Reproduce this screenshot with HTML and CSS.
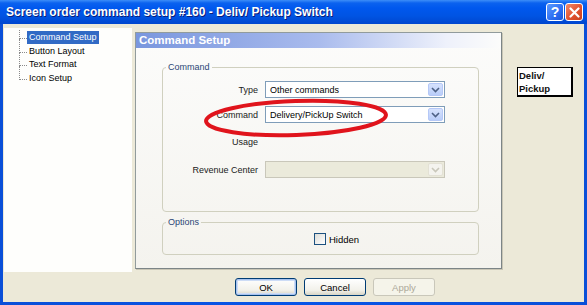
FILE: index.html
```html
<!DOCTYPE html>
<html lang="en">
<head>
    <meta charset="UTF-8">
    <title>Screen order command setup</title>
    <link rel="stylesheet" href="styles.css">
</head>
<body>
    <div class="window">
        <div class="titlebar">
            <span class="title">Screen order command setup #160 - Deliv/ Pickup Switch</span>
            <span class="tbtn help">?</span>
            <span class="tbtn close">
                <svg width="11" height="11" viewBox="0 0 11 11"><path d="M1.5 1.5 L9.5 9.5 M9.5 1.5 L1.5 9.5" stroke="#fff" stroke-width="2.2" stroke-linecap="round"/></svg>
            </span>
        </div>
        <div class="client">
            <div class="top">
                <ul class="tree">
                    <li><span class="sel">Command Setup</span></li>
                    <li><span>Button Layout</span></li>
                    <li><span>Text Format</span></li>
                    <li><span>Icon Setup</span></li>
                </ul>
                <div class="page">
                    <div class="page-head">Command Setup</div>
                    <fieldset class="group cmd">
                        <legend>Command</legend>
                        <div class="form">
                            <label>Type</label>
                            <div class="combo"><span class="val">Other commands</span><span class="drop"><svg width="9" height="6" viewBox="0 0 9 6"><path d="M1 1 L4.5 4.5 L8 1" fill="none" stroke="#4d6185" stroke-width="1.6"/></svg></span></div>
                            <label>Command</label>
                            <div class="combo"><span class="val">Delivery/PickUp Switch</span><span class="drop"><svg width="9" height="6" viewBox="0 0 9 6"><path d="M1 1 L4.5 4.5 L8 1" fill="none" stroke="#4d6185" stroke-width="1.6"/></svg></span></div>
                            <label>Usage</label>
                            <div></div>
                            <label>Revenue Center</label>
                            <div class="combo off"><span class="val"></span><span class="drop"><svg width="9" height="6" viewBox="0 0 9 6"><path d="M1 1 L4.5 4.5 L8 1" fill="none" stroke="#c9c7ba" stroke-width="1.6"/></svg></span></div>
                        </div>
                    </fieldset>
                    <fieldset class="group opts">
                        <legend>Options</legend>
                        <div class="check"><span class="box"></span>Hidden</div>
                    </fieldset>
                </div>
                <div class="preview">Deliv/<br>Pickup</div>
            </div>
            <div class="buttons">
                <span class="btn def">OK</span>
                <span class="btn">Cancel</span>
                <span class="btn dis">Apply</span>
            </div>
        </div>
        <svg class="mark" width="200" height="50" viewBox="0 0 200 50">
            <ellipse cx="100" cy="25" rx="90" ry="17" fill="none" stroke="#e0141c" stroke-width="4" transform="rotate(-2 100 25)"/>
        </svg>
    </div>
</body>
</html>
```

FILE: styles.css
```css
* {
    margin: 0;
    padding: 0;
    box-sizing: border-box;
}
body {
    background: #0831d9;
    font-family: "Liberation Sans", Arial, sans-serif;
    font-size: 9px;
    color: #000;
}
.window {
    position: relative;
    width: 587px;
    height: 305px;
    background: linear-gradient(90deg, #0a4fd8, #0755e8 50%, #0a4fd8);
    display: flex;
    flex-direction: column;
}
.titlebar {
    height: 24px;
    display: flex;
    align-items: center;
    padding: 0 4px 0 6px;
    background: linear-gradient(#3d8ef8 0, #0b62ef 3px, #0058ee 8px, #0054e3 16px, #0046cf 24px);
}
.title {
    flex: 1;
    color: #fff;
    font-weight: bold;
    font-size: 12px;
    text-shadow: 1px 1px 0 #0a1e7a;
}
.tbtn {
    width: 18px;
    height: 18px;
    border: 1px solid #fff;
    border-radius: 3px;
    display: flex;
    align-items: center;
    justify-content: center;
    color: #fff;
    font-weight: bold;
    font-size: 14px;
}
.help {
    background: linear-gradient(135deg, #5e9bff, #2c6ef2 60%, #1b55d8);
    margin-right: 1px;
}
.close {
    background: linear-gradient(135deg, #f08a6a, #e1512f 55%, #c8401f);
}
.client {
    flex: 1;
    margin: 0 3px 3px 3px;
    background: #ece9d8;
    padding: 4px 0 0 1px;
    display: flex;
    flex-direction: column;
}
.top {
    display: flex;
    align-items: flex-start;
}
.tree {
    width: 128px;
    height: 244px;
    background: #fefefc;
    list-style: none;
    padding: 3px 0 0 15px;
}
.tree li {
    position: relative;
    height: 13.5px;
    line-height: 13px;
    padding-left: 8px;
}
.tree li::before {
    content: "";
    position: absolute;
    left: 0;
    top: -6px;
    width: 7px;
    height: 13px;
    border-left: 1px dotted #8a8a8a;
    border-bottom: 1px dotted #8a8a8a;
}
.tree li:first-child::before {
    top: -1px;
    height: 8px;
}
.tree span {
    padding: 0 2px;
}
.tree .sel {
    display: inline-block;
    background: #316ac5;
    color: #fff;
}
.page {
    width: 367px;
    height: 237px;
    margin: 4px 0 0 3px;
    border: 1px solid #919b9c;
    border-right-color: #7c8587;
    border-bottom-color: #7c8587;
    box-shadow: 1px 1px 0 #c9c6b6;
    background: linear-gradient(#fcfcfb, #f4f3ee);
}
.page-head {
    height: 15px;
    line-height: 15px;
    padding-left: 3px;
    background: linear-gradient(90deg, #7996de, #a9bbed 50%, #eef1fb 85%, #fcfcfb);
    color: #fff;
    font-weight: bold;
    font-size: 11.5px;
}
.group {
    border: 1px solid #d0d0bf;
    border-radius: 4px;
    min-width: 0;
    margin: 0 22px 0 26px;
}
.group legend {
    height: 12px;
    line-height: 12px;
    margin-left: 3px;
    padding: 0 2px;
    color: #2b4677;
}
.cmd {
    margin-top: 13px;
    padding: 8px 0 33px 0;
}
.form {
    display: grid;
    grid-template-columns: 95px 180px;
    grid-template-rows: 17px 17px 22px 17px;
    column-gap: 7px;
    row-gap: 8px;
    color: #1a1a1a;
}
.form label {
    text-align: right;
    align-self: center;
}
.combo {
    display: flex;
    align-items: center;
    border: 1px solid #7f9db9;
    background: #fff;
    padding: 1px;
    color: #000;
}
.combo .val {
    flex: 1;
    padding-left: 3px;
}
.drop {
    width: 15px;
    height: 13px;
    border: 1px solid #b5c8f7;
    border-radius: 2px;
    background: linear-gradient(#d6e2fd, #b9cdf9);
    display: flex;
    align-items: center;
    justify-content: center;
}
.combo.off {
    background: #ebeadb;
    border-color: #c9c7ba;
}
.combo.off .drop {
    background: #f4f3ee;
    border-color: #e3e1d5;
}
.opts {
    margin-top: 4px;
    padding: 4px 0 8px 0;
}
.check {
    display: flex;
    align-items: center;
    height: 14px;
    padding-left: 151px;
    font-size: 9.5px;
}
.box {
    width: 12px;
    height: 12px;
    border: 1px solid #1c5180;
    background: linear-gradient(135deg, #dcdcd7, #fff);
    margin-right: 3px;
}
.preview {
    width: 56px;
    height: 30px;
    margin: 39px 0 0 15px;
    padding: 1px 0 0 1px;
    background: #fff;
    border: 1px solid #000;
    border-right-width: 2px;
    border-bottom-width: 2px;
    font-weight: bold;
    font-size: 9.5px;
    line-height: 13px;
    color: #111;
}
.buttons {
    display: flex;
    gap: 7px;
    margin-top: 6px;
    padding-left: 231px;
}
.btn {
    width: 62px;
    height: 18px;
    border: 1px solid #003c74;
    border-radius: 3px;
    background: linear-gradient(#fff, #f2f1ea 70%, #d8d5c6);
    display: flex;
    align-items: center;
    justify-content: center;
    font-size: 9.5px;
}
.btn.def {
    box-shadow: inset 0 0 0 1px #a7c2ee, inset 0 0 0 2px #cddcf6;
}
.btn.dis {
    border-color: #c9c7ba;
    background: #f5f4ea;
    color: #aca899;
}
.mark {
    position: absolute;
    left: 196px;
    top: 93px;
}
```
